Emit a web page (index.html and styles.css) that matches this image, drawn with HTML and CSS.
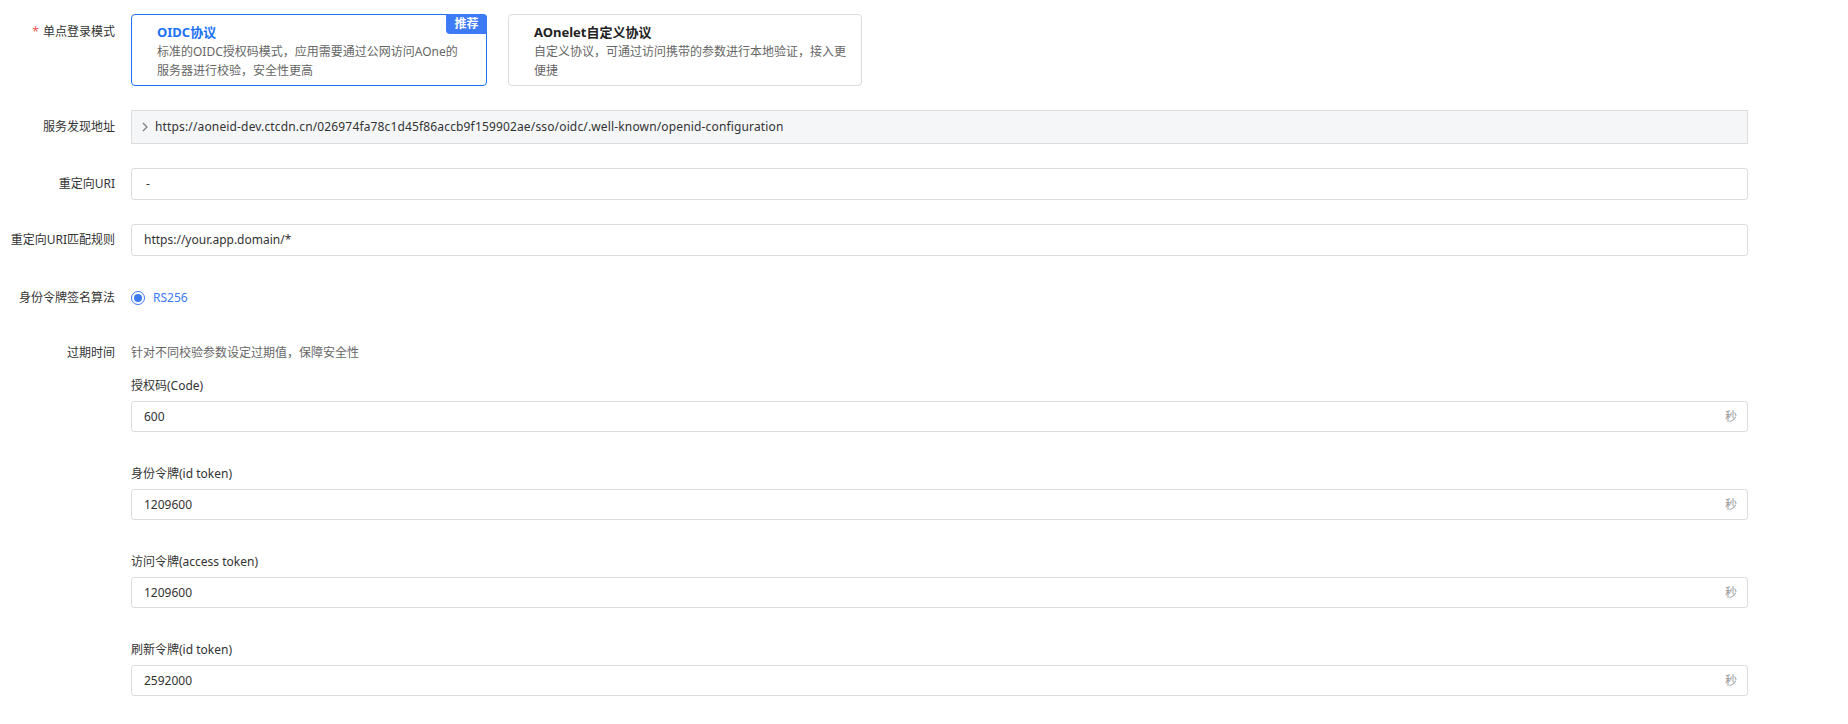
FILE: index.html
```html
<!DOCTYPE html>
<html>
<head>
  <title>单点登录配置</title>
  <meta charset="UTF-8">
  <link rel="stylesheet" href="styles.css">
</head>
<body>
  <div class="form">

    <div class="row row-top row-mode">
      <div class="label label-pad"><span class="req">*</span>单点登录模式</div>
      <div class="field cards">
        <div class="card active">
          <span class="badge">推荐</span>
          <div class="card-title">OIDC协议</div>
          <div class="card-desc">标准的OIDC授权码模式，应用需要通过公网访问AOne的<br>服务器进行校验，安全性更高</div>
        </div>
        <div class="card">
          <div class="card-title">AOnelet自定义协议</div>
          <div class="card-desc">自定义协议，可通过访问携带的参数进行本地验证，接入更<br>便捷</div>
        </div>
      </div>
    </div>

    <div class="row row-discovery">
      <div class="label">服务发现地址</div>
      <div class="field">
        <div class="collapse">
          <svg class="chevron" width="6" height="10" viewBox="0 0 6 10"><path d="M1 1 L5 5 L1 9" fill="none" stroke="#777" stroke-width="1.1"/></svg>
          <span>https://aoneid-dev.ctcdn.cn/026974fa78c1d45f86accb9f159902ae/sso/oidc/.well-known/openid-configuration</span>
        </div>
      </div>
    </div>

    <div class="row">
      <div class="label">重定向URI</div>
      <div class="field">
        <div class="input input-dash">-</div>
      </div>
    </div>

    <div class="row">
      <div class="label">重定向URI匹配规则</div>
      <div class="field">
        <div class="input">https://your.app.domain/*</div>
      </div>
    </div>

    <div class="row row-radio">
      <div class="label">身份令牌签名算法</div>
      <div class="field">
        <label class="radio"><span class="radio-dot"></span>RS256</label>
      </div>
    </div>

    <div class="row row-top row-expire">
      <div class="label">过期时间</div>
      <div class="field">
        <div class="hint">针对不同校验参数设定过期值，保障安全性</div>

        <div class="sub">
          <div class="sub-label">授权码(Code)</div>
          <div class="input input-suffix"><span>600</span><span class="unit">秒</span></div>
        </div>

        <div class="sub">
          <div class="sub-label">身份令牌(id token)</div>
          <div class="input input-suffix"><span>1209600</span><span class="unit">秒</span></div>
        </div>

        <div class="sub">
          <div class="sub-label">访问令牌(access token)</div>
          <div class="input input-suffix"><span>1209600</span><span class="unit">秒</span></div>
        </div>

        <div class="sub">
          <div class="sub-label">刷新令牌(id token)</div>
          <div class="input input-suffix"><span>2592000</span><span class="unit">秒</span></div>
        </div>
      </div>
    </div>

  </div>
</body>
</html>
```

FILE: styles.css
```css
html {
  background: white;
}
body {
  margin: 0;
  font: 12px/20px "Noto Sans", "Noto Sans CJK SC", sans-serif;
  color: #333;
}
.form {
  width: 1748px;
  padding-top: 14px;
}
.row {
  display: flex;
  align-items: center;
  margin-top: 24px;
}
.row-top {
  align-items: flex-start;
}
.row-mode {
  margin-top: 0;
}
.row-radio {
  margin-top: 32px;
}
.row-expire {
  margin-top: 35px;
}
.label {
  flex: 0 0 115px;
  padding-right: 16px;
  text-align: right;
  color: #333;
  white-space: nowrap;
}
.label-pad {
  padding-top: 8px;
}
.req {
  color: #f5564e;
  margin-right: 4px;
}
.field {
  flex: 1;
  min-width: 0;
}
.cards {
  display: flex;
  gap: 21px;
}
.card {
  position: relative;
  box-sizing: border-box;
  width: 354px;
  height: 72px;
  padding: 7px 16px 5px 25px;
  border: 1px solid #dcdcdc;
  border-radius: 4px;
}
.card.active {
  width: 356px;
  border-color: #1b72f6;
}
.card-title {
  font-size: 13px;
  font-weight: bold;
  color: #222;
}
.card.active .card-title {
  color: #1b72f6;
}
.card-desc {
  line-height: 19px;
  color: #666;
  white-space: nowrap;
}
.badge {
  position: absolute;
  top: -1px;
  right: -1px;
  width: 41px;
  height: 20px;
  line-height: 20px;
  text-align: center;
  color: #fff;
  font-weight: bold;
  background: #3d7af6;
  border-radius: 0 4px 0 4px;
}
.collapse {
  display: flex;
  align-items: center;
  gap: 7px;
  box-sizing: border-box;
  height: 34px;
  padding-left: 10px;
  background: #f5f6f8;
  border: 1px solid #dcdcdc;
  letter-spacing: 0.15px;
}
.input {
  display: flex;
  align-items: center;
  box-sizing: border-box;
  height: 32px;
  padding: 0 10px 0 12px;
  border: 1px solid #dcdcdc;
  border-radius: 3px;
  background: #fff;
}
.input-dash {
  padding-left: 14px;
}
.input-suffix {
  height: 31px;
  justify-content: space-between;
}
.unit {
  color: #999;
}
.radio {
  display: flex;
  align-items: center;
  gap: 8px;
  color: #3d7af6;
}
.radio-dot {
  box-sizing: border-box;
  width: 14px;
  height: 14px;
  border: 1px solid #3d7af6;
  border-radius: 50%;
  display: flex;
  align-items: center;
  justify-content: center;
}
.radio-dot::after {
  content: "";
  width: 8px;
  height: 8px;
  border-radius: 50%;
  background: #3d7af6;
}
.hint {
  color: #666;
}
.sub {
  margin-top: 32px;
}
.hint + .sub {
  margin-top: 13px;
}
.sub-label {
  margin-bottom: 5px;
  color: #333;
}
```
